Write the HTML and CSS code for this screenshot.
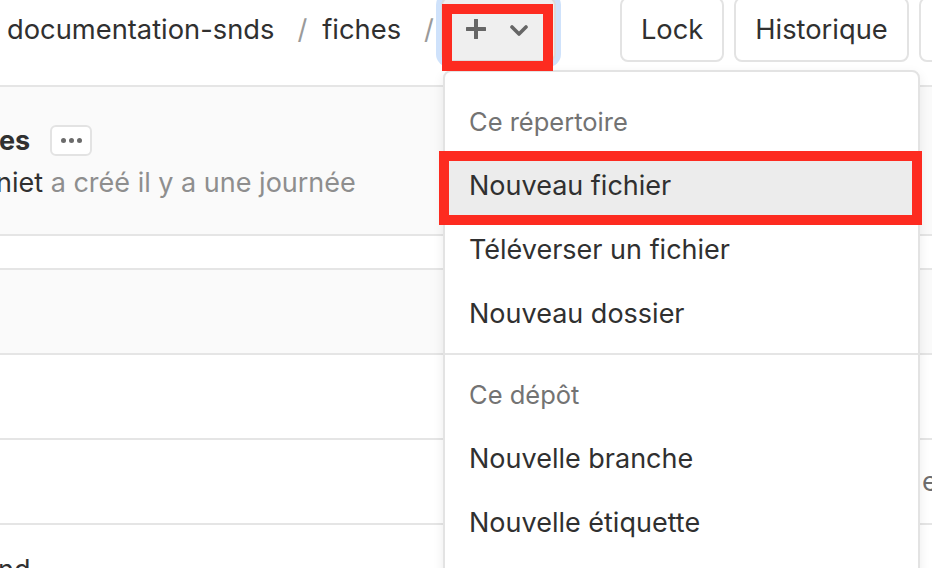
FILE: index.html
```html
<!DOCTYPE html>
<html lang="fr">
<head>
<meta charset="utf-8">
<title>fiches · documentation-snds</title>
<link rel="stylesheet" href="styles.css">
</head>
<body>
<div class="page">
  <header class="topbar">
    <nav class="crumbs">
      <span class="crumb">documentation-snds</span>
      <span class="sep">/</span>
      <span class="crumb">fiches</span>
      <span class="sep sep-last">/</span>
      <button class="add-btn" type="button">
        <svg class="ic-plus" width="20" height="20" viewBox="0 0 20 20"><path d="M10 1v18M1 10h18" stroke="#666" stroke-width="4" stroke-linecap="round" fill="none"/></svg>
        <svg class="ic-chev" width="18" height="11" viewBox="0 0 18 11"><path d="M2 2l7 7 7-7" stroke="#666" stroke-width="3.6" stroke-linecap="round" stroke-linejoin="round" fill="none"/></svg>
      </button>
    </nav>
    <div class="actions">
      <button class="btn" type="button">Lock</button>
      <button class="btn" type="button">Historique</button>
      <button class="btn btn-more" type="button">Rechercher</button>
    </div>
  </header>

  <section class="tree">
    <div class="commit-box">
      <div class="commit-title">
        <span class="title">es</span>
        <button class="more" type="button"><span></span><span></span><span></span></button>
      </div>
      <div class="commit-meta"><span class="author">niet</span> a créé il y a une journée</div>
    </div>
    <div class="row row-head"></div>
    <div class="row row-gray"></div>
    <div class="row"></div>
    <div class="row"><span class="name"></span><span class="msg">e</span></div>
    <div class="row"><span class="name cut">nd</span><span class="msg"></span></div>
  </section>

  <div class="dropdown">
    <div class="dd-header">Ce répertoire</div>
    <div class="dd-item active">Nouveau fichier</div>
    <div class="dd-item">Téléverser un fichier</div>
    <div class="dd-item">Nouveau dossier</div>
    <div class="dd-divider"></div>
    <div class="dd-header">Ce dépôt</div>
    <div class="dd-item">Nouvelle branche</div>
    <div class="dd-item">Nouvelle étiquette</div>
  </div>

  <div class="mark mark-btn"></div>
  <div class="mark mark-item"></div>
</div>
</body>
</html>
```

FILE: styles.css
```css
* { box-sizing: border-box; }

html, body {
  margin: 0;
  padding: 0;
  background: #fff;
}

body {
  font-family: Inter, "Noto Sans", "Liberation Sans", sans-serif;
  font-size: 27px;
  color: #303030;
}

.page {
  position: relative;
  width: 932px;
  height: 568px;
  overflow: hidden;
}

/* ---------- top bar ---------- */
.topbar {
  display: flex;
  align-items: flex-start;
  height: 90px;
  margin-top: -3px;
  border-bottom: 2px solid #e5e5e5;
  white-space: nowrap;
}

.crumbs {
  display: flex;
  align-items: center;
  height: 65px;
  padding-left: 7px;
  font-size: 27.3px;
}

.crumb {
  color: #303030;
}

.sep {
  color: #9a9a9a;
  margin: 0 15px 0 23px;
}

.sep.sep-last {
  margin-right: 7px;
}

.add-btn {
  display: flex;
  align-items: center;
  gap: 24px;
  height: 65px;
  width: 115px;
  padding: 0 0 0 23px;
  background: #efefef;
  border: 2px solid #dcdcdc;
  border-radius: 8px;
  box-shadow: 0 0 0 5px #cfe2fb;
}

.ic-plus { margin-top: -2px; }
.ic-chev { margin-top: 2px; }

.actions {
  display: flex;
  gap: 10px;
  margin-left: 64px;
}

.btn {
  height: 65px;
  padding: 0 19px;
  font: inherit;
  font-size: 27.3px;
  color: #303030;
  background: #fff;
  border: 2px solid #e3e3e3;
  border-radius: 8px;
}

/* ---------- file tree ---------- */
.tree {
  display: flex;
  flex-direction: column;
}

.commit-box {
  height: 149px;
  background: #fafafa;
  border-bottom: 2px solid #e5e5e5;
  padding-top: 37px;
}

.commit-title {
  display: flex;
  align-items: center;
  height: 32px;
}

.title {
  font-weight: 700;
  margin-left: -1px;
}

.more {
  display: flex;
  align-items: center;
  justify-content: center;
  gap: 3px;
  width: 42px;
  height: 31px;
  margin-left: 20px;
  padding: 0;
  background: #fff;
  border: 2px solid #e3e3e3;
  border-radius: 6px;
}

.more span {
  width: 5px;
  height: 5px;
  border-radius: 50%;
  background: #6b6b6b;
}

.commit-meta {
  margin-top: 10px;
  color: #8e8e8e;
  line-height: 34px;
}

.author {
  color: #303030;
  margin-left: -4px;
}

.row {
  display: grid;
  grid-template-columns: 922px 1fr;
  align-items: center;
  height: 85px;
  border-bottom: 2px solid #e5e5e5;
  white-space: nowrap;
}

.row-head {
  height: 34px;
}

.row-gray {
  background: #fafafa;
}

.row .msg {
  color: #6e6e6e;
}

.name.cut {
  margin-left: -2px;
  padding-top: 6px;
}

/* ---------- dropdown ---------- */
.dropdown {
  position: absolute;
  left: 443px;
  top: 70px;
  width: 477px;
  height: 540px;
  padding-top: 18px;
  background: #fff;
  border: 2px solid #e3e3e3;
  border-radius: 8px;
  box-shadow: 0 4px 12px rgba(0, 0, 0, 0.08);
}

.dd-header,
.dd-item {
  height: 64px;
  line-height: 64px;
  padding-left: 24px;
  white-space: nowrap;
}

.dd-header {
  font-size: 25.5px;
  color: #737373;
}

.dd-item {
  color: #303030;
}

.dd-item.active {
  background: #ececec;
}

.dd-divider {
  height: 2px;
  margin: 7px 0 8px;
  background: #e5e5e5;
}

/* ---------- red annotation boxes ---------- */
.mark {
  position: absolute;
  border: 10px solid #fd2b20;
  pointer-events: none;
}

.mark-btn {
  left: 442px;
  top: 4px;
  width: 111px;
  height: 67px;
}

.mark-item {
  left: 439px;
  top: 151px;
  width: 483px;
  height: 74px;
}
```
